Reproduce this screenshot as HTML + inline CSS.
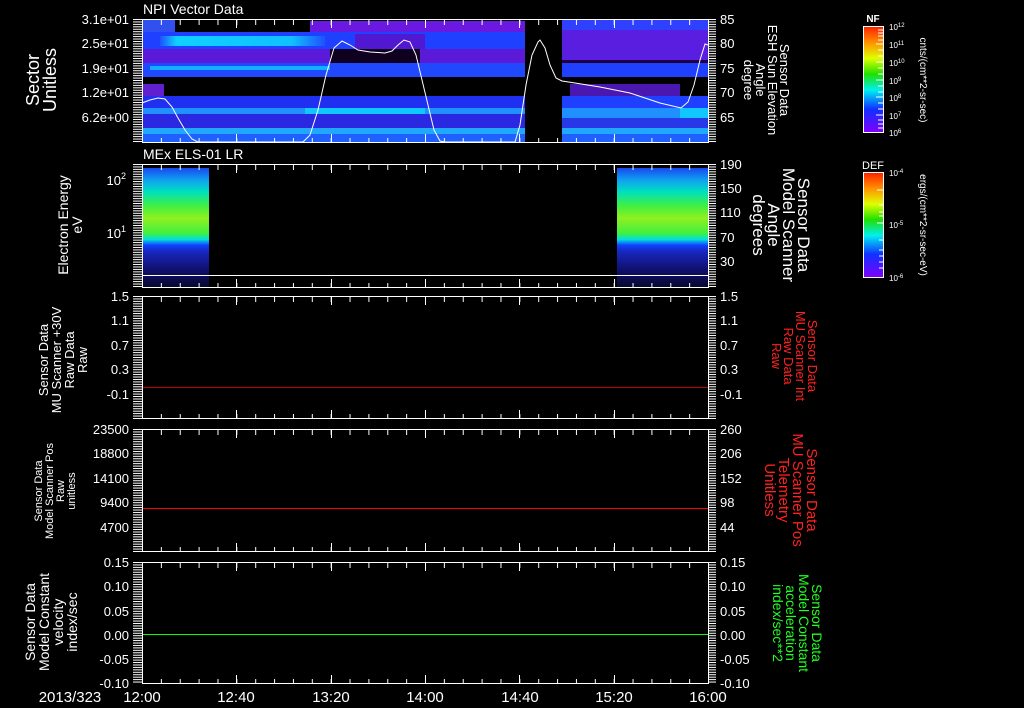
<!DOCTYPE html>
<html><head><meta charset="utf-8"><style>
html,body{margin:0;padding:0;background:#000;}
svg{display:block;}
text{font-family:"Liberation Sans",sans-serif;fill:#fff;}
</style></head><body>
<svg width="1024" height="708" viewBox="0 0 1024 708" xmlns="http://www.w3.org/2000/svg">
<defs>
<pattern id="yt" patternUnits="userSpaceOnUse" width="9" height="2.44"><rect x="0" y="0" width="9" height="1" fill="#fff"/></pattern>
<pattern id="xtT" patternUnits="userSpaceOnUse" width="18.867" height="6"><rect x="0" y="0" width="1" height="5" fill="#fff"/></pattern>
<pattern id="xtB" patternUnits="userSpaceOnUse" width="18.867" height="6"><rect x="0" y="1" width="1" height="5" fill="#fff"/></pattern>
<linearGradient id="rb" x1="0" y1="0" x2="0" y2="1">
<stop offset="0" stop-color="#ff2000"/><stop offset="0.15" stop-color="#ff9000"/><stop offset="0.3" stop-color="#e0ff00"/><stop offset="0.45" stop-color="#20e000"/><stop offset="0.6" stop-color="#00f0f0"/><stop offset="0.78" stop-color="#1030ff"/><stop offset="1" stop-color="#8000ff"/>
</linearGradient>
<linearGradient id="spec" x1="0" y1="168" x2="0" y2="287" gradientUnits="userSpaceOnUse">
<stop offset="0" stop-color="#1848f0"/><stop offset="0.1" stop-color="#10a0f0"/><stop offset="0.2" stop-color="#00e0c0"/><stop offset="0.32" stop-color="#40f040"/><stop offset="0.42" stop-color="#90f020"/><stop offset="0.55" stop-color="#40f040"/><stop offset="0.6" stop-color="#00e0e0"/><stop offset="0.65" stop-color="#1040ff"/><stop offset="0.7" stop-color="#1828c0"/><stop offset="0.85" stop-color="#101070"/><stop offset="1" stop-color="#080830"/>
</linearGradient>
<linearGradient id="cyanL" x1="0" x2="1" y1="0" y2="0">
<stop offset="0" stop-color="#2050ff"/><stop offset="0.1" stop-color="#10d0ff"/><stop offset="0.8" stop-color="#10c0ff"/><stop offset="1" stop-color="#2050ff"/>
</linearGradient>
</defs>

<g>
<rect x="142" y="19" width="33" height="13" fill="#3050f0"/>
<rect x="310" y="21" width="215" height="11" fill="#6a1ae0"/>
<rect x="142" y="32" width="383" height="17" fill="#2040ff"/>
<rect x="160" y="36" width="165" height="10" fill="url(#cyanL)"/>
<rect x="355" y="34" width="70" height="16" fill="#5018d0"/>
<rect x="142" y="49" width="383" height="14" fill="#5a1ad8"/>
<rect x="330" y="49" width="90" height="14" fill="#100020"/>
<rect x="142" y="63" width="383" height="14" fill="#2048ff"/>
<rect x="150" y="66" width="180" height="4" fill="#10b0ff"/>
<rect x="142" y="84" width="22" height="12" fill="#6020d0"/>
<rect x="142" y="96" width="383" height="12" fill="#2030f0"/>
<rect x="142" y="108" width="383" height="6" fill="#2090ff"/>
<rect x="305" y="108" width="120" height="10" fill="#10c8ff"/>
<rect x="142" y="114" width="383" height="14" fill="#2a28e0"/>
<rect x="142" y="128" width="383" height="6" fill="#20a8ff"/>
<rect x="142" y="134" width="383" height="8" fill="#2060ff"/>
<rect x="562" y="19" width="146" height="11" fill="#3040ff"/>
<rect x="562" y="30" width="146" height="30" fill="#5a1ee0"/>
<rect x="562" y="60" width="146" height="3" fill="#200040"/>
<rect x="562" y="63" width="146" height="14" fill="#2040ff"/>
<rect x="570" y="84" width="110" height="12" fill="#4a18b0"/>
<rect x="562" y="96" width="146" height="12" fill="#2040ff"/>
<rect x="562" y="108" width="146" height="10" fill="#2090ff"/>
<rect x="680" y="108" width="28" height="10" fill="#10c8ff"/>
<rect x="562" y="118" width="146" height="10" fill="#2838e8"/>
<rect x="562" y="128" width="146" height="6" fill="#20a8ff"/>
<rect x="562" y="134" width="146" height="8" fill="#2060ff"/>
<polyline fill="none" stroke="#fff" stroke-width="1" points="142,103 150,100 158,98 165,99 172,107 178,118 185,130 192,139 198,142 303,142 310,135 318,110 326,75 334,48 342,41 350,45 358,50 370,52 385,53 392,51 398,45 404,40 410,42 416,55 422,80 428,105 434,130 440,141 445,142 515,142 520,125 526,85 532,55 538,42 540,40 545,48 550,65 556,78 562,81 575,83 600,87 630,93 660,103 681,108 688,102 694,85 700,60 705,44 708,45"/>
</g>

<rect x="142" y="168" width="67" height="119" fill="url(#spec)"/>
<rect x="617" y="168" width="91" height="119" fill="url(#spec)"/>
<line x1="142" y1="275.5" x2="708" y2="275.5" stroke="#fff"/>

<line x1="142" y1="387.5" x2="708" y2="387.5" stroke="#c00000"/>
<line x1="142" y1="508.5" x2="708" y2="508.5" stroke="#ff0000"/>
<line x1="142" y1="634.5" x2="708" y2="634.5" stroke="#00ff00"/>

<g fill="none" stroke="#fff" stroke-width="1">
<rect x="142.5" y="19.5" width="566" height="123"/>
<rect x="142.5" y="164.5" width="566" height="123"/>
<rect x="142.5" y="296.5" width="566" height="122"/>
<rect x="142.5" y="429.5" width="566" height="122"/>
<rect x="142.5" y="562.5" width="566" height="121"/>
</g>
<g>
<g transform="translate(133,19)"><rect width="9" height="124" fill="url(#yt)"/></g>
<g transform="translate(709,19)"><rect width="7" height="124" fill="url(#yt)"/></g>
<g transform="translate(133,164)"><rect width="9" height="124" fill="url(#yt)"/></g>
<g transform="translate(709,164)"><rect width="7" height="124" fill="url(#yt)"/></g>
<g transform="translate(133,296)"><rect width="9" height="123" fill="url(#yt)"/></g>
<g transform="translate(709,296)"><rect width="7" height="123" fill="url(#yt)"/></g>
<g transform="translate(133,429)"><rect width="9" height="123" fill="url(#yt)"/></g>
<g transform="translate(709,429)"><rect width="7" height="123" fill="url(#yt)"/></g>
<g transform="translate(133,562)"><rect width="9" height="122" fill="url(#yt)"/></g>
<g transform="translate(709,562)"><rect width="7" height="122" fill="url(#yt)"/></g>
<g transform="translate(142,20)"><rect width="567" height="5" fill="url(#xtT)"/></g>
<g transform="translate(142,137)"><rect width="567" height="6" fill="url(#xtB)"/></g>
<g transform="translate(142,165)"><rect width="567" height="5" fill="url(#xtT)"/></g>
<g transform="translate(142,282)"><rect width="567" height="6" fill="url(#xtB)"/></g>
<g transform="translate(142,297)"><rect width="567" height="5" fill="url(#xtT)"/></g>
<g transform="translate(142,413)"><rect width="567" height="6" fill="url(#xtB)"/></g>
<g transform="translate(142,430)"><rect width="567" height="5" fill="url(#xtT)"/></g>
<g transform="translate(142,546)"><rect width="567" height="6" fill="url(#xtB)"/></g>
<g transform="translate(142,563)"><rect width="567" height="5" fill="url(#xtT)"/></g>
<g transform="translate(142,678)"><rect width="567" height="6" fill="url(#xtB)"/></g>
</g>
<g stroke="#fff">
<path d="M236.5 20v8M331.5 20v8M425.5 20v8M519.5 20v8M614.5 20v8M236.5 134v8M331.5 134v8M425.5 134v8M519.5 134v8M614.5 134v8
M236.5 165v8M331.5 165v8M425.5 165v8M519.5 165v8M614.5 165v8M236.5 279v8M331.5 279v8M425.5 279v8M519.5 279v8M614.5 279v8
M236.5 297v8M331.5 297v8M425.5 297v8M519.5 297v8M614.5 297v8M236.5 410v8M331.5 410v8M425.5 410v8M519.5 410v8M614.5 410v8
M236.5 430v8M331.5 430v8M425.5 430v8M519.5 430v8M614.5 430v8M236.5 543v8M331.5 543v8M425.5 543v8M519.5 543v8M614.5 543v8
M236.5 563v8M331.5 563v8M425.5 563v8M519.5 563v8M614.5 563v8M236.5 675v8M331.5 675v8M425.5 675v8M519.5 675v8M614.5 675v8"/>
</g>

<text x="143" y="14" font-size="14">NPI Vector Data</text>
<text x="143" y="159" font-size="14">MEx ELS-01 LR</text>

<g font-size="13" text-anchor="end">
<text x="129" y="24">3.1e+01</text><text x="129" y="48">2.5e+01</text><text x="129" y="73">1.9e+01</text><text x="129" y="97">1.2e+01</text><text x="129" y="122">6.2e+00</text>
<text x="126" y="185">10<tspan font-size="9" dy="-6">2</tspan></text>
<text x="126" y="238">10<tspan font-size="9" dy="-6">1</tspan></text>
<text x="129" y="301">1.5</text><text x="129" y="325">1.1</text><text x="129" y="350">0.7</text><text x="129" y="374">0.3</text><text x="129" y="399">-0.1</text>
<text x="129" y="434">23500</text><text x="129" y="458">18800</text><text x="129" y="483">14100</text><text x="129" y="507">9400</text><text x="129" y="532">4700</text>
<text x="129" y="567">0.15</text><text x="129" y="591">0.10</text><text x="129" y="616">0.05</text><text x="129" y="640">0.00</text><text x="129" y="664">-0.05</text><text x="129" y="688">-0.10</text>
</g>
<g font-size="13">
<text x="720" y="24">85</text><text x="720" y="48">80</text><text x="720" y="73">75</text><text x="720" y="97">70</text><text x="720" y="122">65</text>
<text x="720" y="169">190</text><text x="720" y="193">150</text><text x="720" y="217">110</text><text x="720" y="242">70</text><text x="720" y="266">30</text>
<text x="720" y="301">1.5</text><text x="720" y="325">1.1</text><text x="720" y="350">0.7</text><text x="720" y="374">0.3</text><text x="720" y="399">-0.1</text>
<text x="720" y="434">260</text><text x="720" y="458">206</text><text x="720" y="483">152</text><text x="720" y="507">98</text><text x="720" y="532">44</text>
<text x="720" y="567">0.15</text><text x="720" y="591">0.10</text><text x="720" y="616">0.05</text><text x="720" y="640">0.00</text><text x="720" y="664">-0.05</text><text x="720" y="688">-0.10</text>
</g>
<g font-size="15" text-anchor="middle">
<text x="70" y="702">2013/323</text>
<text x="142" y="702">12:00</text><text x="236" y="702">12:40</text><text x="331" y="702">13:20</text><text x="425" y="702">14:00</text><text x="520" y="702">14:40</text><text x="614" y="702">15:20</text><text x="708" y="702">16:00</text>
</g>

<g text-anchor="middle">
<text transform="translate(42,80) rotate(-90)" font-size="18"><tspan x="0" dy="-3">Sector</tspan><tspan x="0" dy="17">Unitless</tspan></text>
<text transform="translate(70,225) rotate(-90)" font-size="14"><tspan x="0" dy="-2">Electron Energy</tspan><tspan x="0" dy="14">eV</tspan></text>
<text transform="translate(62,360) rotate(-90)" font-size="13"><tspan x="0" dy="-14">Sensor Data</tspan><tspan x="0" dy="13">MU Scanner +30V</tspan><tspan x="0" dy="13">Raw Data</tspan><tspan x="0" dy="13">Raw</tspan></text>
<text transform="translate(54,491) rotate(-90)" font-size="11"><tspan x="0" dy="-12">Sensor Data</tspan><tspan x="0" dy="11">Model Scanner Pos</tspan><tspan x="0" dy="11">Raw</tspan><tspan x="0" dy="11">unitless</tspan></text>
<text transform="translate(50,622) rotate(-90)" font-size="14"><tspan x="0" dy="-15">Sensor Data</tspan><tspan x="0" dy="14">Model Constant</tspan><tspan x="0" dy="14">velocity</tspan><tspan x="0" dy="14">index/sec</tspan></text>
</g>
<g text-anchor="middle">
<text transform="translate(766,80) rotate(90)" font-size="13"><tspan x="0" dy="-14">Sensor Data</tspan><tspan x="0" dy="12">ESH Sun Elevation</tspan><tspan x="0" dy="12">Angle</tspan><tspan x="0" dy="12">degree</tspan></text>
<text transform="translate(778,225) rotate(90)" font-size="17"><tspan x="0" dy="-20">Sensor Data</tspan><tspan x="0" dy="15">Model Scanner</tspan><tspan x="0" dy="15">Angle</tspan><tspan x="0" dy="15">degrees</tspan></text>
<text transform="translate(793,356) rotate(90)" font-size="13" style="fill:#ff2020"><tspan x="0" dy="-15">Sensor Data</tspan><tspan x="0" dy="12">MU Scanner Int</tspan><tspan x="0" dy="12">Raw Data</tspan><tspan x="0" dy="12">Raw</tspan></text>
<text transform="translate(789,490) rotate(90)" font-size="15" style="fill:#ff2020"><tspan x="0" dy="-18">Sensor Data</tspan><tspan x="0" dy="14">MU Scanner Pos</tspan><tspan x="0" dy="14">Telemetry</tspan><tspan x="0" dy="14">Unitless</tspan></text>
<text transform="translate(795,623) rotate(90)" font-size="14" style="fill:#20ff20"><tspan x="0" dy="-17">Sensor Data</tspan><tspan x="0" dy="13">Model Constant</tspan><tspan x="0" dy="13">acceleration</tspan><tspan x="0" dy="13">index/sec**2</tspan></text>
</g>

<rect x="863.5" y="26.5" width="20" height="106" fill="url(#rb)" stroke="#fff"/>
<rect x="863.5" y="172.5" width="20" height="105" fill="url(#rb)" stroke="#fff"/>
<g stroke="#fff">
<path d="M878 30h5M878 33h5M878 36h5M878 40h5M876 44h7M878 50h5M878 56h5M876 62h7M878 68h5M878 74h5M876 80h7M878 86h5M878 92h5M876 97h7M878 103h5M878 109h5M876 115h7M878 120h5M878 124h5M878 128h5"/>
<path d="M877 190h6M879 205h4M879 212h4M879 216h4M877 223h6M879 240h4M879 250h4M879 256h4M879 262h4M879 268h4"/>
</g>
<text x="873" y="22" font-size="10" text-anchor="middle" font-weight="bold">NF</text>
<text x="873" y="169" font-size="11" text-anchor="middle">DEF</text>
<g font-size="8">
<text x="889" y="30">10<tspan font-size="6" dy="-3">12</tspan></text>
<text x="889" y="48">10<tspan font-size="6" dy="-3">11</tspan></text>
<text x="889" y="66">10<tspan font-size="6" dy="-3">10</tspan></text>
<text x="889" y="84">10<tspan font-size="6" dy="-3">9</tspan></text>
<text x="889" y="101">10<tspan font-size="6" dy="-3">8</tspan></text>
<text x="889" y="119">10<tspan font-size="6" dy="-3">7</tspan></text>
<text x="889" y="136">10<tspan font-size="6" dy="-3">6</tspan></text>
<text x="889" y="176">10<tspan font-size="6" dy="-3">-4</tspan></text>
<text x="889" y="228">10<tspan font-size="6" dy="-3">-5</tspan></text>
<text x="889" y="281">10<tspan font-size="6" dy="-3">-6</tspan></text>
</g>
<text transform="translate(920,80) rotate(90)" font-size="10" text-anchor="middle">cnts/(cm**2-sr-sec)</text>
<text transform="translate(920,225) rotate(90)" font-size="10" text-anchor="middle">ergs/(cm**2-sr-sec-eV)</text>
</svg>
</body></html>
